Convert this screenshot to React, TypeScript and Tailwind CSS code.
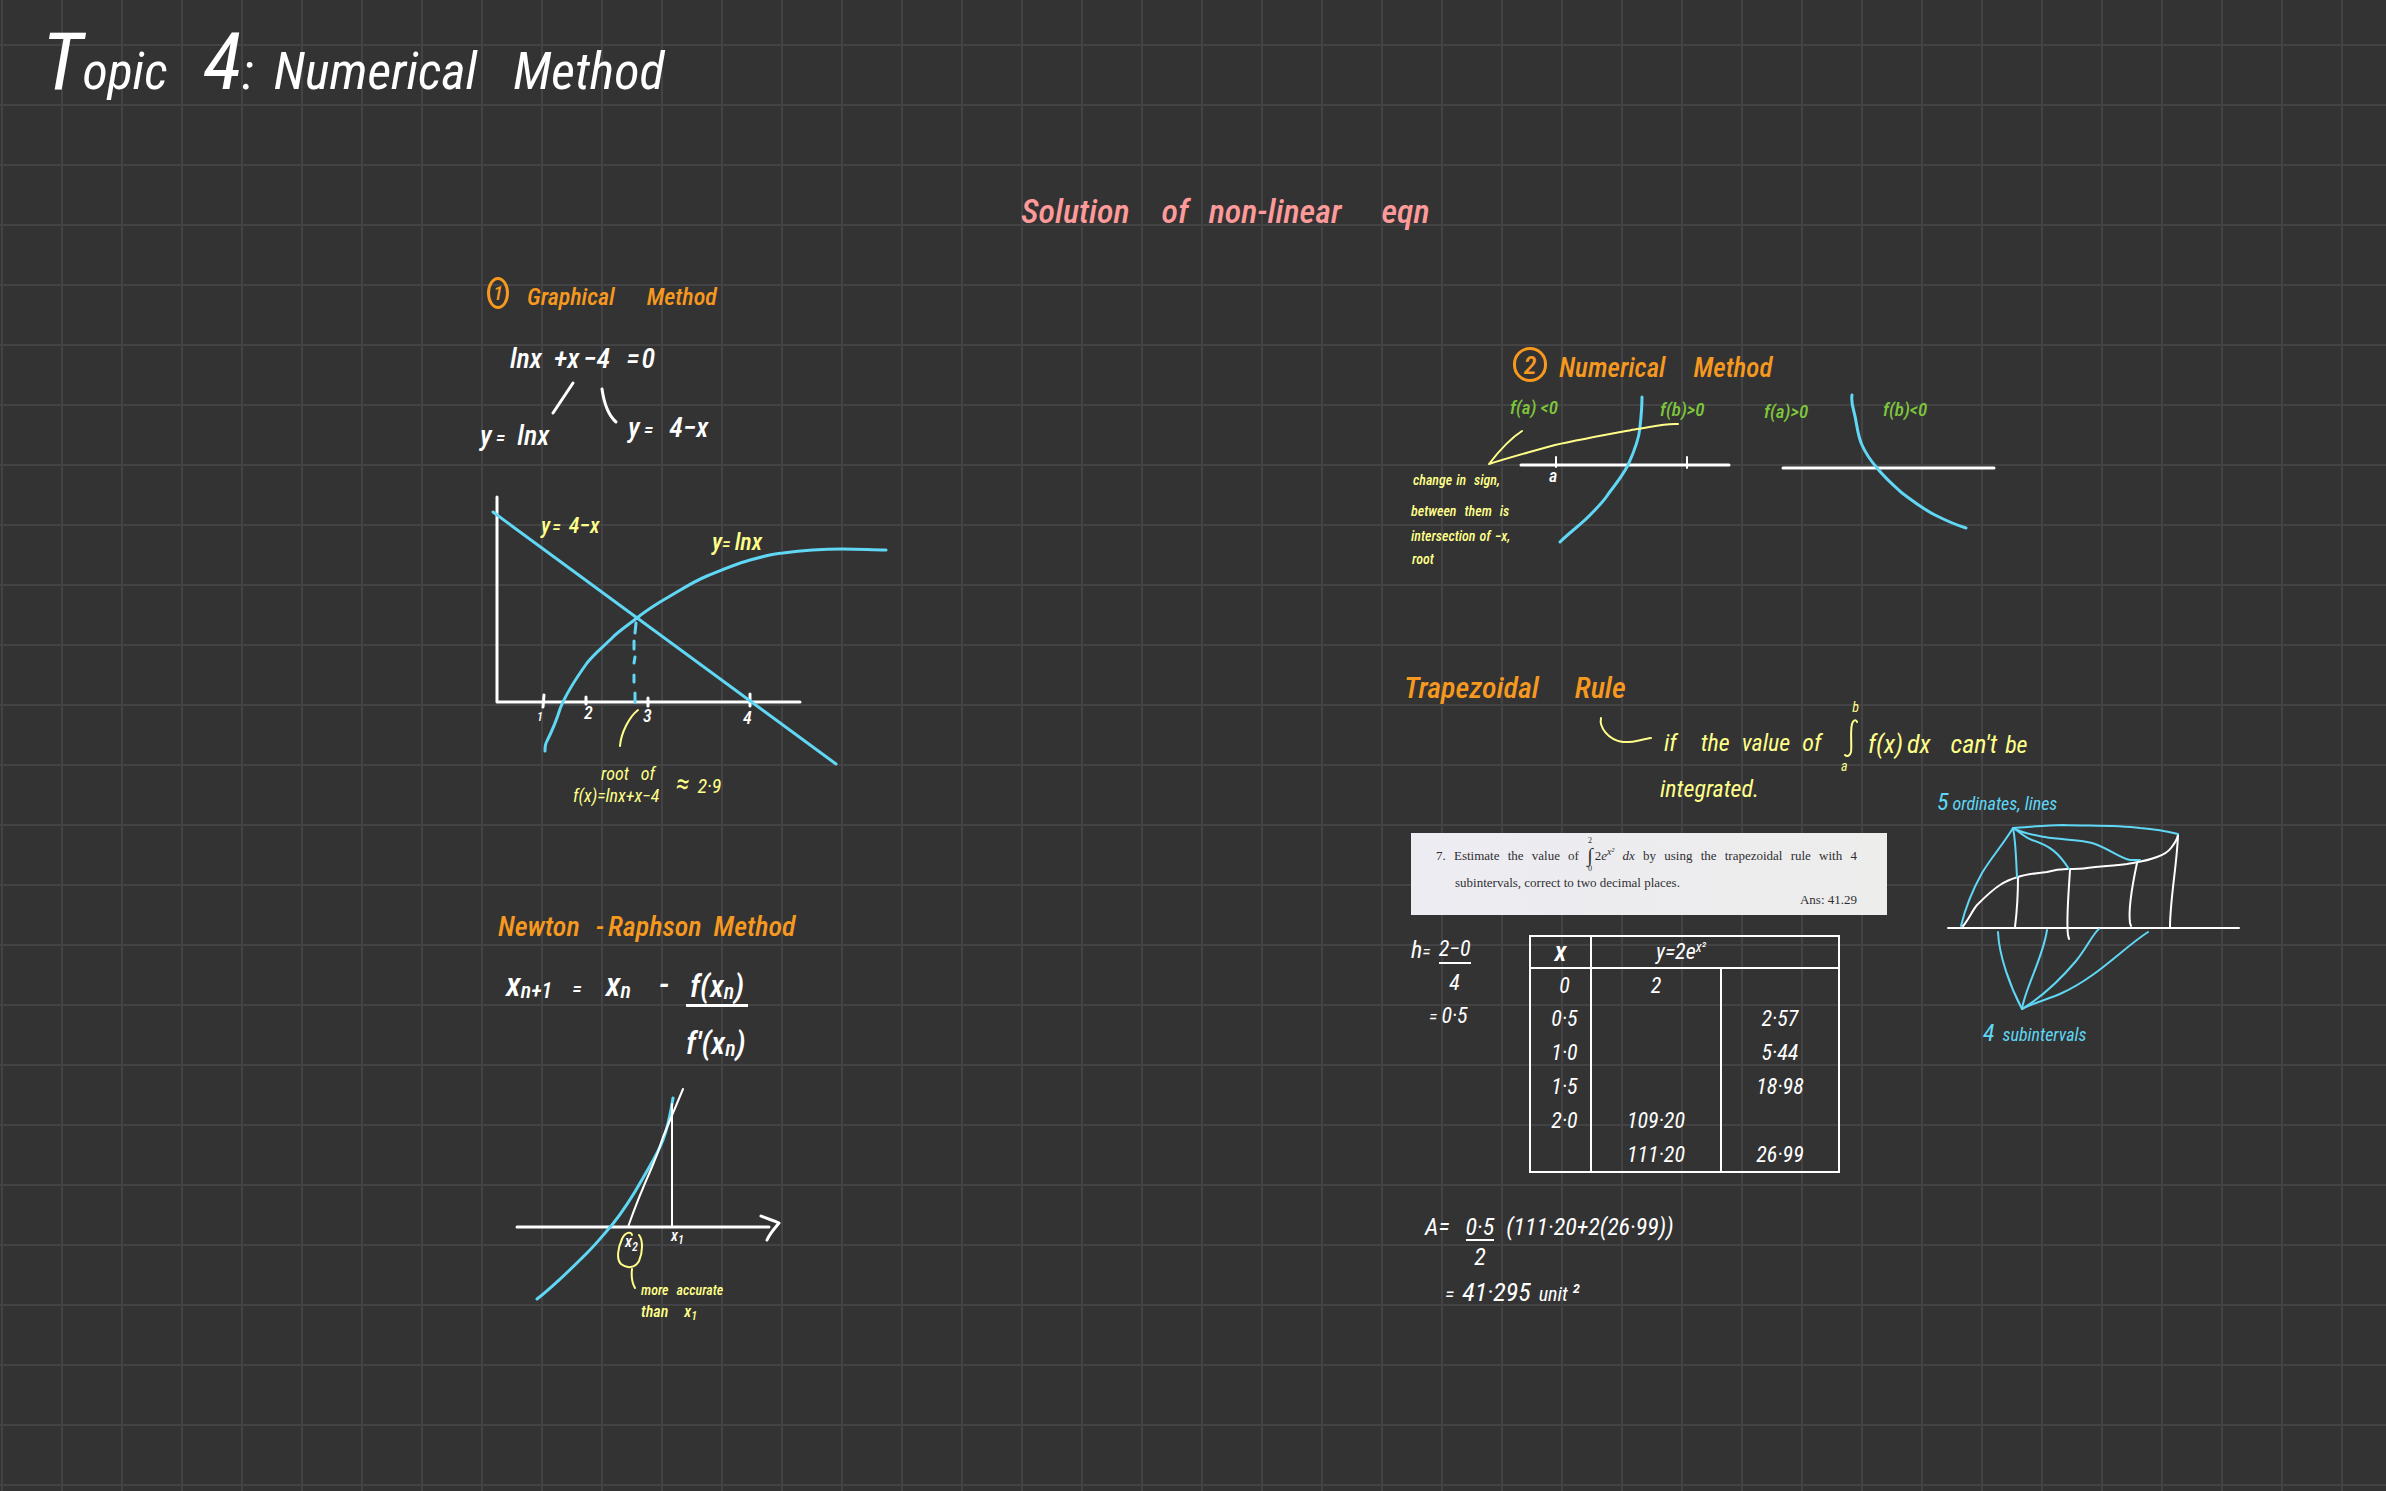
import type { ReactNode } from "react";

type NoteProps = { className: string; children: ReactNode };

/** One handwritten line, pinned to its place on the free canvas. */
function Note({ className, children }: NoteProps) {
  return (
    <p className={`absolute flex items-baseline whitespace-nowrap leading-none ${className}`}>{children}</p>
  );
}

function Heading({ className, children }: NoteProps) {
  return (
    <h2 className={`absolute flex items-end whitespace-nowrap font-medium leading-none ${className}`}>{children}</h2>
  );
}

function Sub({ children }: { children: ReactNode }) {
  return <sub className="bottom-0 top-[2px] text-[22px] leading-none">{children}</sub>;
}

const stroke = { fill: "none", strokeLinecap: "round", strokeLinejoin: "round" } as const;
const BLUE = "#5fd7f5";
const YELLOW = "#ffff8a";
const WHITE = "#ffffff";

function GraphicalMethod() {
  return (
    <section aria-label="Graphical method" className="font-medium">
      <Heading className="left-[487px] top-[277px] text-[24px] text-[#f7991f]">
        <span className="flex h-[32px] w-[22px] items-center justify-center rounded-[50%] border-[3px] border-[#f7991f] text-[20px]">
          1
        </span>
        <span className="ml-[18px]">Graphical</span>
        <span className="ml-8">Method</span>
      </Heading>

      <Note className="left-[510px] top-[345px] text-[28px] text-white">
        <span>lnx</span>
        <span className="ml-3">+</span>
        <span>x</span>
        <span className="ml-1">−</span>
        <span>4</span>
        <span className="ml-4">=</span>
        <span className="ml-[2px]">0</span>
      </Note>
      <svg className="absolute left-[540px] top-[376px]" width="90" height="52" viewBox="540 376 90 52" aria-hidden="true">
        <g {...stroke} stroke={WHITE} strokeWidth="3">
          <path d="M573 383L553 413" />
          <path d="M602 389C604 403 608 415 616 422" />
        </g>
      </svg>
      <Note className="left-[480px] top-[422px] text-[28px] text-white">
        <span>y</span>
        <span className="ml-1 text-[20px]">=</span>
        <span className="ml-3">lnx</span>
      </Note>
      <Note className="left-[628px] top-[414px] text-[28px] text-white">
        <span>y</span>
        <span className="ml-1 text-[20px]">=</span>
        <span className="ml-4">4−x</span>
      </Note>

      <svg className="absolute left-[480px] top-[485px]" width="420" height="290" viewBox="480 485 420 290" role="img" aria-label="Graph of y = 4 - x and y = ln x">
        <g {...stroke} stroke={WHITE} strokeWidth="3">
          <path d="M497 497V702H800" />
          <path d="M544 695L543 707M586 697V704M648 698V706M750 694V706" />
        </g>
        <g {...stroke} stroke={BLUE} strokeWidth="3">
          <path d="M493 512L836 764" />
          <path d="M545 751C545 746 545 744 547 741C551 733 556 722 560 709C566 693 577 677 587 663C594 654 603 647 613 637C619 631 628 625 637 618C644 612 652 607 660 602C678 592 690 583 707 576C722 570 733 565 747 561C761 557 770 554 783 553C805 550 823 549 843 549C860 549 872 550 886 550" />
          <path d="M636 623L635 633M634 641V649M635 657L634 663M634 675V682M635 693V702" />
        </g>
        <path {...stroke} stroke={YELLOW} strokeWidth="2" d="M638 710C629 717 621 733 620 746" />
        <g fill={WHITE} fontSize="18" fontWeight="500">
          <text x="537" y="721" fontSize="12">1</text>
          <text x="584" y="719">2</text>
          <text x="643" y="722">3</text>
          <text x="743" y="724">4</text>
        </g>
      </svg>
      <Note className="left-[541px] top-[515px] text-[22px] text-[#ffff8a]">
        <span>y</span>
        <span className="ml-[2px] text-[18px]">=</span>
        <span className="ml-2">4−x</span>
      </Note>
      <Note className="left-[712px] top-[530px] text-[24px] text-[#ffff8a]">
        <span>y</span>
        <span className="text-[18px]">=</span>
        <span className="ml-1">lnx</span>
      </Note>
      <Note className="left-[601px] top-[765px] gap-3 text-[18px] font-normal text-[#ffff8a]">
        <span>root</span>
        <span>of</span>
      </Note>
      <Note className="left-[573px] top-[787px] text-[18px] font-normal text-[#ffff8a]">f(x)=lnx+x−4</Note>
      <Note className="left-[676px] top-[770px] gap-2 text-[20px] font-normal text-[#ffff8a]">
        <span className="text-[28px]">≈</span>
        <span>2·9</span>
      </Note>
    </section>
  );
}

function NewtonRaphson() {
  return (
    <section aria-label="Newton-Raphson method" className="font-medium">
      <Heading className="left-[498px] top-[913px] text-[28px] text-[#f7991f]">
        <span>Newton</span>
        <span className="ml-4">-</span>
        <span className="ml-1">Raphson</span>
        <span className="ml-3">Method</span>
      </Heading>

      <Note className="left-[506px] top-[967px] text-[34px] text-white">
        <span>x</span>
        <Sub>n+1</Sub>
        <span className="ml-5 text-[20px]">=</span>
        <span className="ml-6">x</span>
        <Sub>n</Sub>
        <span className="ml-7">-</span>
      </Note>
      <div className="absolute left-[686px] top-[970px] flex flex-col text-[32px] leading-none text-white">
        <span className="flex items-baseline border-b-[3px] border-white px-1 pb-[2px]">
          f(x<Sub>n</Sub>)
        </span>
        <span className="mt-5 flex items-baseline">
          f′(x<Sub>n</Sub>)
        </span>
      </div>

      <svg className="absolute left-[510px] top-[1080px]" width="280" height="225" viewBox="510 1080 280 225" role="img" aria-label="Tangent construction">
        <g {...stroke} stroke={WHITE}>
          <path strokeWidth="3" d="M517 1227H769" />
          <path strokeWidth="3" d="M761 1216C767 1219 773 1220 779 1223C775 1228 770 1233 767 1240" />
        </g>
        <path {...stroke} stroke={BLUE} strokeWidth="3" d="M537 1299C554 1286 570 1270 587 1253C597 1243 604 1234 612 1225C624 1210 634 1194 643 1178C651 1164 658 1153 663 1140C669 1124 671 1110 673 1098" />
        <g {...stroke} stroke={WHITE} strokeWidth="2">
          <path d="M628 1227C636 1204 644 1185 652 1167C656 1158 660 1147 663 1137L683 1089" />
          <path d="M672 1104V1227" />
        </g>
        <g {...stroke} stroke={YELLOW} strokeWidth="2">
          <path d="M632 1235C631 1231 625 1232 622 1239C618 1248 616 1259 621 1264C627 1269 635 1268 639 1261C643 1252 643 1240 639 1235" />
          <path d="M632 1269C631 1278 632 1283 635 1288" />
        </g>
        <g fill={WHITE} fontSize="16" fontWeight="500">
          <text x="625" y="1247">x<tspan dy="4" fontSize="12">2</tspan></text>
          <text x="671" y="1241">x<tspan dy="3" fontSize="12">1</tspan></text>
        </g>
      </svg>
      <Note className="left-[641px] top-[1283px] gap-2 text-[14px] text-[#ffff8a]">
        <span>more</span>
        <span>accurate</span>
      </Note>
      <Note className="left-[641px] top-[1304px] gap-4 text-[16px] text-[#ffff8a]">
        <span>than</span>
        <span>
          x<sub className="bottom-0 top-[3px] text-[12px] leading-none">1</sub>
        </span>
      </Note>
    </section>
  );
}

function NumericalMethod() {
  return (
    <section aria-label="Numerical method" className="font-medium">
      <Heading className="left-[1513px] top-[347px] text-[27px] text-[#f7991f]">
        <span className="flex h-[35px] w-[34px] items-center justify-center rounded-full border-[3px] border-[#f7991f] text-[26px]">
          2
        </span>
        <span className="ml-3">Numerical</span>
        <span className="ml-7">Method</span>
      </Heading>

      <Note className="left-[1510px] top-[398px] gap-1 text-[19px] text-[#7ec63c]">
        <span>f(a)</span>
        <span>&lt;0</span>
      </Note>
      <Note className="left-[1660px] top-[400px] text-[19px] text-[#7ec63c]">f(b)&gt;0</Note>
      <Note className="left-[1764px] top-[402px] text-[19px] text-[#7ec63c]">f(a)&gt;0</Note>
      <Note className="left-[1883px] top-[400px] text-[19px] text-[#7ec63c]">f(b)&lt;0</Note>

      <svg className="absolute left-[1480px] top-[388px]" width="525" height="165" viewBox="1480 388 525 165" role="img" aria-label="Sign change around a root">
        <g {...stroke} stroke={WHITE}>
          <path strokeWidth="3" d="M1521 465H1729M1783 468H1994" />
          <path strokeWidth="2" d="M1556 457V467M1687 457V468" />
        </g>
        <g {...stroke} stroke={BLUE} strokeWidth="3">
          <path d="M1642 397C1642 408 1641 418 1640 427C1639 440 1634 452 1628 465C1623 475 1616 484 1609 493C1604 501 1598 507 1592 513C1583 523 1570 532 1560 542" />
          <path d="M1852 395C1851 401 1852 405 1854 412C1857 423 1857 434 1862 445C1866 454 1871 461 1877 468C1885 478 1893 485 1902 493C1913 501 1923 509 1935 515C1945 520 1956 525 1966 528" />
        </g>
        <path {...stroke} stroke={YELLOW} strokeWidth="2" d="M1522 431C1511 438 1499 451 1489 464C1511 457 1533 451 1555 445C1582 439 1610 434 1637 429C1651 427 1665 423 1678 424" />
        <text x="1549" y="482" fill={WHITE} fontSize="18" fontWeight="500">a</text>
      </svg>

      <Note className="left-[1413px] top-[473px] text-[14px] text-[#ffff8a]">
        <span>change</span>
        <span className="ml-1">in</span>
        <span className="ml-2">sign,</span>
      </Note>
      <Note className="left-[1411px] top-[504px] text-[14px] text-[#ffff8a]">
        <span>between</span>
        <span className="ml-2">them</span>
        <span className="ml-2">is</span>
      </Note>
      <Note className="left-[1411px] top-[529px] text-[14px] text-[#ffff8a]">
        <span>intersection</span>
        <span className="ml-1">of</span>
        <span className="ml-1">−x,</span>
      </Note>
      <Note className="left-[1412px] top-[552px] text-[14px] text-[#ffff8a]">root</Note>
    </section>
  );
}

function QuestionCard() {
  return (
    <article className="absolute left-[1411px] top-[833px] flex w-[476px] flex-col bg-linear-to-r from-[#ececf2] to-[#ededec] pb-[7px] pl-[25px] pr-[30px] pt-[6px] font-['Liberation_Serif',serif] text-[13px] not-italic leading-none text-[#2f2f33]">
      <div className="flex h-[32px] items-center justify-between whitespace-nowrap">
        <span>7.</span>
        <span>Estimate</span>
        <span>the</span>
        <span>value</span>
        <span>of</span>
        <span className="flex items-center gap-[2px]">
          <span className="flex flex-col items-center">
            <span className="text-[8px]">2</span>
            <span className="text-[20px]">∫</span>
            <span className="text-[8px]">0</span>
          </span>
          <span className="flex items-baseline">
            2<i>e</i>
            <sup className="text-[10px] italic leading-none">x²</sup>
          </span>
        </span>
        <i>dx</i>
        <span>by</span>
        <span>using</span>
        <span>the</span>
        <span>trapezoidal</span>
        <span>rule</span>
        <span>with</span>
        <span>4</span>
      </div>
      <p className="mt-[5px] pl-[19px]">subintervals, correct to two decimal places.</p>
      <p className="mt-[4px] pb-[2px] text-right">Ans: 41.29</p>
    </article>
  );
}

const rows = [
  ["0", "2", ""],
  ["0·5", "", "2·57"],
  ["1·0", "", "5·44"],
  ["1·5", "", "18·98"],
  ["2·0", "109·20", ""],
  ["", "111·20", "26·99"],
];

function OrdinateTable() {
  return (
    <table className="absolute left-[1529px] top-[935px] w-[311px] table-fixed border-collapse border-2 border-white text-center text-[22px] leading-none text-white">
      <colgroup>
        <col className="w-[61px]" />
        <col className="w-[130px]" />
        <col />
      </colgroup>
      <thead>
        <tr className="h-[32px] border-b-2 border-white">
          <th scope="col" className="border-r-2 border-white text-[28px] font-medium">
            x
          </th>
          <th scope="col" colSpan={2} className="pl-16 text-left font-normal">
            y=2e<sup className="text-[14px] leading-none">x²</sup>
          </th>
        </tr>
      </thead>
      <tbody>
        {rows.map(([x, ends, middle], i) => (
          <tr key={i} className="h-[34px]">
            <td className="border-r-2 border-white pl-2">{x}</td>
            <td className="border-r-2 border-white">{ends}</td>
            <td>{middle}</td>
          </tr>
        ))}
      </tbody>
    </table>
  );
}

function TrapezoidalRule() {
  return (
    <section aria-label="Trapezoidal rule" className="font-normal">
      <Heading className="left-[1404px] top-[673px] gap-9 text-[30px] text-[#f7991f]">
        <span>Trapezoidal</span>
        <span>Rule</span>
      </Heading>
      <svg className="absolute left-[1590px] top-[710px]" width="70" height="40" viewBox="1590 710 70 40" aria-hidden="true">
        <path {...stroke} stroke={YELLOW} strokeWidth="2" d="M1601 718C1599 727 1608 740 1623 742C1633 743 1642 739 1651 738" />
      </svg>
      <Note className="left-[1664px] top-[731px] text-[24px] text-[#ffff8a]">
        <span>if</span>
        <span className="ml-6">the</span>
        <span className="ml-3">value</span>
        <span className="ml-3">of</span>
      </Note>
      <div className="absolute left-[1841px] top-[700px] flex w-[18px] flex-col text-[14px] leading-none text-[#ffff8a]">
        <span className="self-end">b</span>
        <svg className="mb-px mt-1" width="18" height="40" viewBox="0 0 18 40" role="img" aria-label="integral">
          <path {...stroke} stroke={YELLOW} strokeWidth="2" d="M16 4C15 1 12 2 11 6C9 14 11 27 10 34C9 38 6 39 4 37" />
        </svg>
        <span>a</span>
      </div>
      <Note className="left-[1868px] top-[731px] text-[26px] text-[#ffff8a]">
        <span>f(x)</span>
        <span className="ml-1">dx</span>
        <span className="ml-5">can't</span>
        <span className="ml-2 text-[24px]">be</span>
      </Note>
      <Note className="left-[1660px] top-[777px] text-[24px] text-[#ffff8a]">integrated.</Note>

      <QuestionCard />

      <div className="absolute left-[1411px] top-[938px] flex items-start text-[22px] leading-none text-white">
        <span className="flex items-baseline text-[24px]">
          h<span className="text-[18px]">=</span>
        </span>
        <span className="ml-2 flex flex-col items-center">
          <span className="w-[32px] border-b-2 border-white pb-[2px] text-center">2−0</span>
          <span className="mt-2">4</span>
        </span>
      </div>
      <Note className="left-[1429px] top-[1005px] gap-1 text-[22px] text-white">
        <span className="text-[18px]">=</span>
        <span>0·5</span>
      </Note>

      <OrdinateTable />

      <div className="absolute left-[1425px] top-[1215px] flex items-start whitespace-nowrap text-[24px] leading-none text-white">
        <span>A=</span>
        <span className="ml-4 flex flex-col items-center">
          <span className="border-b-2 border-white">0·5</span>
          <span className="mt-1">2</span>
        </span>
        <span className="ml-3">(</span>
        <span>111·20</span>
        <span>+</span>
        <span>2</span>
        <span>(</span>
        <span>26·99</span>
        <span>)</span>
        <span>)</span>
      </div>
      <Note className="left-[1445px] top-[1279px] text-[26px] text-white">
        <span className="text-[20px]">=</span>
        <span className="ml-2">41·295</span>
        <span className="ml-2 text-[20px]">unit</span>
        <span className="ml-1 text-[24px]">²</span>
      </Note>

      <Note className="left-[1937px] top-[790px] text-[18px] text-[#5fd7f5]">
        <span className="text-[24px]">5</span>
        <span className="ml-1">ordinates,</span>
        <span className="ml-1">lines</span>
      </Note>
      <svg className="absolute left-[1940px] top-[818px]" width="305" height="198" viewBox="1940 818 305 198" role="img" aria-label="Area split into four strips">
        <g {...stroke} stroke={WHITE} strokeWidth="2">
          <path d="M1948 928H2239" />
          <path d="M1963 926C1969 919 1972 911 1977 905C1984 898 1992 890 2000 885C2006 881 2011 879 2018 877C2027 874 2037 873 2047 872C2054 870 2060 869 2067 869C2074 869 2081 869 2087 868C2102 866 2114 866 2127 864C2138 862 2147 861 2157 857C2163 855 2168 852 2171 848C2175 843 2177 840 2178 835" />
          <path d="M2018 877C2018 895 2017 911 2015 927" />
          <path d="M2070 870C2069 888 2066 920 2068 935L2069 939" />
          <path d="M2137 863C2134 877 2128 908 2130 923L2131 926" />
          <path d="M2178 835C2177 864 2170 900 2170 927" />
        </g>
        <g {...stroke} stroke={BLUE} strokeWidth="2">
          <path d="M2013 828C2004 843 1991 858 1982 873C1972 891 1965 909 1961 926" />
          <path d="M2013 828C2016 843 2016 860 2017 877" />
          <path d="M2013 828C2020 832 2024 837 2032 840C2050 846 2058 852 2069 869" />
          <path d="M2013 828C2024 834 2034 835 2045 837C2061 840 2077 839 2092 843C2108 848 2120 858 2130 860H2140" />
          <path d="M2013 828C2030 827 2046 825 2063 825C2089 826 2115 825 2140 828C2153 829 2166 831 2178 834" />
          <path d="M1998 932C1999 956 2010 986 2022 1009" />
          <path d="M2047 930C2043 958 2025 988 2022 1009" />
          <path d="M2099 929C2094 932 2086 949 2076 961C2060 980 2040 998 2022 1009" />
          <path d="M2148 932C2122 949 2097 977 2062 993C2049 999 2033 1003 2022 1009" />
        </g>
      </svg>
      <Note className="left-[1983px] top-[1021px] text-[18px] text-[#5fd7f5]">
        <span className="text-[24px]">4</span>
        <span className="ml-2">subintervals</span>
      </Note>
    </section>
  );
}

export default function App() {
  return (
    <main className="relative min-h-screen w-full overflow-auto bg-[#333333] bg-[linear-gradient(to_right,#434346_2px,transparent_2px),linear-gradient(to_bottom,#434346_2px,transparent_2px)] bg-[length:60px_60px] bg-[position:1px_-16px] font-['Roboto_Condensed','Roboto',sans-serif] italic">
      <h1 className="absolute left-[42px] top-[22px] flex items-baseline whitespace-nowrap text-[52px] font-normal leading-none text-white">
        <span>
          <span className="text-[80px]">T</span>opic
        </span>
        <span className="ml-9 text-[80px]">4</span>
        <span>:</span>
        <span className="ml-5">Numerical</span>
        <span className="ml-9">Method</span>
      </h1>
      <Heading className="left-[1021px] top-[194px] text-[34px] text-[#ff9a9a]">
        <span>Solution</span>
        <span className="ml-8">of</span>
        <span className="ml-5">non-linear</span>
        <span className="ml-10">eqn</span>
      </Heading>
      <GraphicalMethod />
      <NewtonRaphson />
      <NumericalMethod />
      <TrapezoidalRule />
    </main>
  );
}
